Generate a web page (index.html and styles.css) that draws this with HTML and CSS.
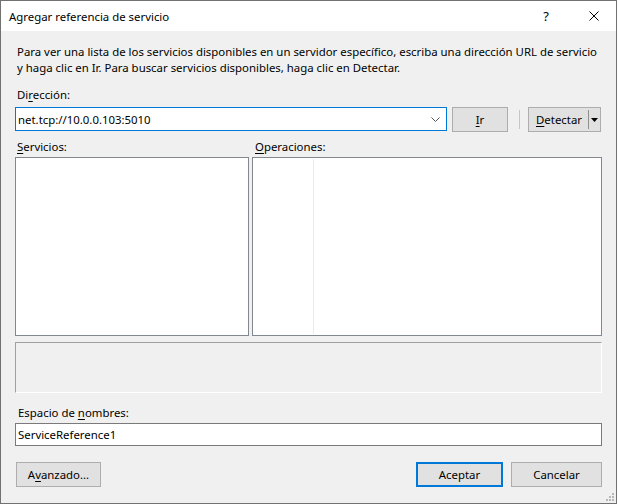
FILE: index.html
```html
<!DOCTYPE html>
<html lang="es">
<head>
    <meta charset="UTF-8">
    <title>Agregar referencia de servicio</title>
    <link rel="stylesheet" href="styles.css">
</head>
<body>

<div class="dialog">
    <div class="titlebar">
        <span class="title">Agregar referencia de servicio</span>
        <span class="tb-btn help">?</span>
        <span class="tb-btn close">
            <svg width="10" height="10" viewBox="0 0 10 10"><path d="M0.5 0.5 L9.5 9.5 M9.5 0.5 L0.5 9.5" stroke="#000" stroke-width="1" fill="none"/></svg>
        </span>
    </div>

    <div class="content">
        <p class="intro">Para ver una lista de los servicios disponibles en un servidor específico, escriba una dirección URL de servicio<br>y haga clic en Ir. Para buscar servicios disponibles, haga clic en Detectar.</p>

        <div class="label">Di<u>r</u>ección:</div>
        <div class="address-row">
            <div class="combo">
                <span>net.tcp://10.0.0.103:5010</span>
                <svg class="chevron" width="9" height="5" viewBox="0 0 9 5"><path d="M0.5 0.5 L4.5 4.5 L8.5 0.5" stroke="#555" stroke-width="1" fill="none"/></svg>
            </div>
            <button class="btn btn-go"><u>I</u>r</button>
            <div class="vsep"></div>
            <div class="split">
                <span class="split-main"><u>D</u>etectar</span>
                <span class="split-arrow">
                    <svg width="7" height="4" viewBox="0 0 7 4"><path d="M0 0 H7 L3.5 4 Z" fill="#000"/></svg>
                </span>
            </div>
        </div>

        <div class="panes">
            <div class="pane pane-services">
                <div class="label"><u>S</u>ervicios:</div>
                <div class="list"></div>
            </div>
            <div class="pane pane-ops">
                <div class="label"><u>O</u>peraciones:</div>
                <div class="list"><div class="col-line"></div></div>
            </div>
        </div>

        <div class="status"></div>

        <div class="label label-ns">Espacio de <u>n</u>ombres:</div>
        <div class="textbox">ServiceReference1</div>

        <div class="buttons">
            <button class="btn btn-adv">A<u>v</u>anzado...</button>
            <button class="btn btn-ok">Aceptar</button>
            <button class="btn btn-cancel">Cancelar</button>
        </div>
    </div>

    <svg class="grip" width="9" height="9" viewBox="0 0 9 9">
        <rect x="7" y="1" width="2" height="2" fill="#b8b8b8"/>
        <rect x="4" y="4" width="2" height="2" fill="#b8b8b8"/>
        <rect x="7" y="4" width="2" height="2" fill="#b8b8b8"/>
        <rect x="1" y="7" width="2" height="2" fill="#b8b8b8"/>
        <rect x="4" y="7" width="2" height="2" fill="#b8b8b8"/>
        <rect x="7" y="7" width="2" height="2" fill="#b8b8b8"/>
    </svg>
</div>

</body>
</html>
```

FILE: styles.css
```css
* {
    box-sizing: border-box;
}
html, body {
    margin: 0;
    padding: 0;
}
body {
    font-family: "Noto Sans", sans-serif;
    font-size: 11.4px;
    color: #000;
    background-color: #fff;
}
u {
    text-decoration-thickness: 1px;
    text-underline-offset: 2px;
}
.dialog {
    width: 617px;
    height: 504px;
    border: 1px solid #717171;
    background-color: #f0f0f0;
    position: relative;
    display: flex;
    flex-direction: column;
}
.titlebar {
    height: 30px;
    background-color: #fff;
    display: flex;
    align-items: center;
    padding-left: 8px;
}
.title {
    flex: 1;
}
.tb-btn {
    width: 46px;
    height: 30px;
    display: flex;
    align-items: center;
    justify-content: center;
}
.help {
    font-size: 13px;
    padding-right: 4px;
}
.close {
    width: 45px;
}
.content {
    flex: 1;
    padding: 0 14px;
    display: flex;
    flex-direction: column;
}
.intro {
    margin: 13px 0 0;
    padding-left: 2px;
    line-height: 16px;
    white-space: nowrap;
}
.label {
    line-height: 16px;
    padding-left: 2px;
    margin-top: 11px;
}
.address-row {
    display: flex;
    align-items: flex-start;
    margin-top: 4px;
    height: 25px;
}
.combo {
    width: 432px;
    height: 24px;
    background-color: #fff;
    border: 1px solid #0078d7;
    display: flex;
    align-items: center;
    justify-content: space-between;
    padding: 0 6px 0 2px;
}
.chevron {
    margin-top: 1px;
}
.btn {
    font-family: inherit;
    font-size: 11.4px;
    color: #000;
    height: 25px;
    background-color: #e1e1e1;
    border: 1px solid #adadad;
    padding: 0;
}
.btn-go {
    width: 56px;
    margin-left: 5px;
}
.vsep {
    width: 1px;
    height: 19px;
    margin: 3px 8px 0 11px;
    background-color: #c6c6c6;
}
.split {
    width: 73px;
    height: 25px;
    background-color: #e1e1e1;
    border: 1px solid #adadad;
    display: flex;
    align-items: center;
}
.split-main {
    width: 59px;
    text-align: center;
    padding-left: 1px;
}
.split-arrow {
    height: 19px;
    flex: 1;
    border-left: 1px solid #8e8e8e;
    display: flex;
    align-items: center;
    justify-content: center;
}
.panes {
    display: flex;
    gap: 3px;
    margin-top: 7px;
}
.pane-services {
    width: 234px;
}
.pane-ops {
    flex: 1;
}
.pane .label {
    margin-top: 0;
}
.pane-ops .label {
    padding-left: 3px;
}
.list {
    height: 179px;
    margin-top: 2px;
    background-color: #fff;
    border: 1px solid #828790;
    position: relative;
}
.col-line {
    position: absolute;
    left: 60px;
    top: 1px;
    bottom: 1px;
    width: 1px;
    background-color: #e7eaf0;
}
.status {
    height: 51px;
    margin-top: 6px;
    border-top: 1px solid #a0a0a0;
    border-left: 1px solid #a0a0a0;
    border-right: 1px solid #fff;
    border-bottom: 1px solid #fff;
}
.label-ns {
    margin-top: 12px;
    padding-left: 3px;
}
.textbox {
    height: 23px;
    margin-top: 2px;
    background-color: #fff;
    border: 1px solid #7a7a7a;
    padding-left: 2px;
    line-height: 21px;
}
.buttons {
    display: flex;
    margin-top: 16px;
}
.btn-adv {
    width: 85px;
    margin-left: 1px;
    margin-right: auto;
}
.btn-ok {
    width: 87px;
    border: 2px solid #0078d7;
}
.btn-cancel {
    width: 91px;
    margin-left: 8px;
}
.grip {
    position: absolute;
    right: 2px;
    bottom: 2px;
}
```
